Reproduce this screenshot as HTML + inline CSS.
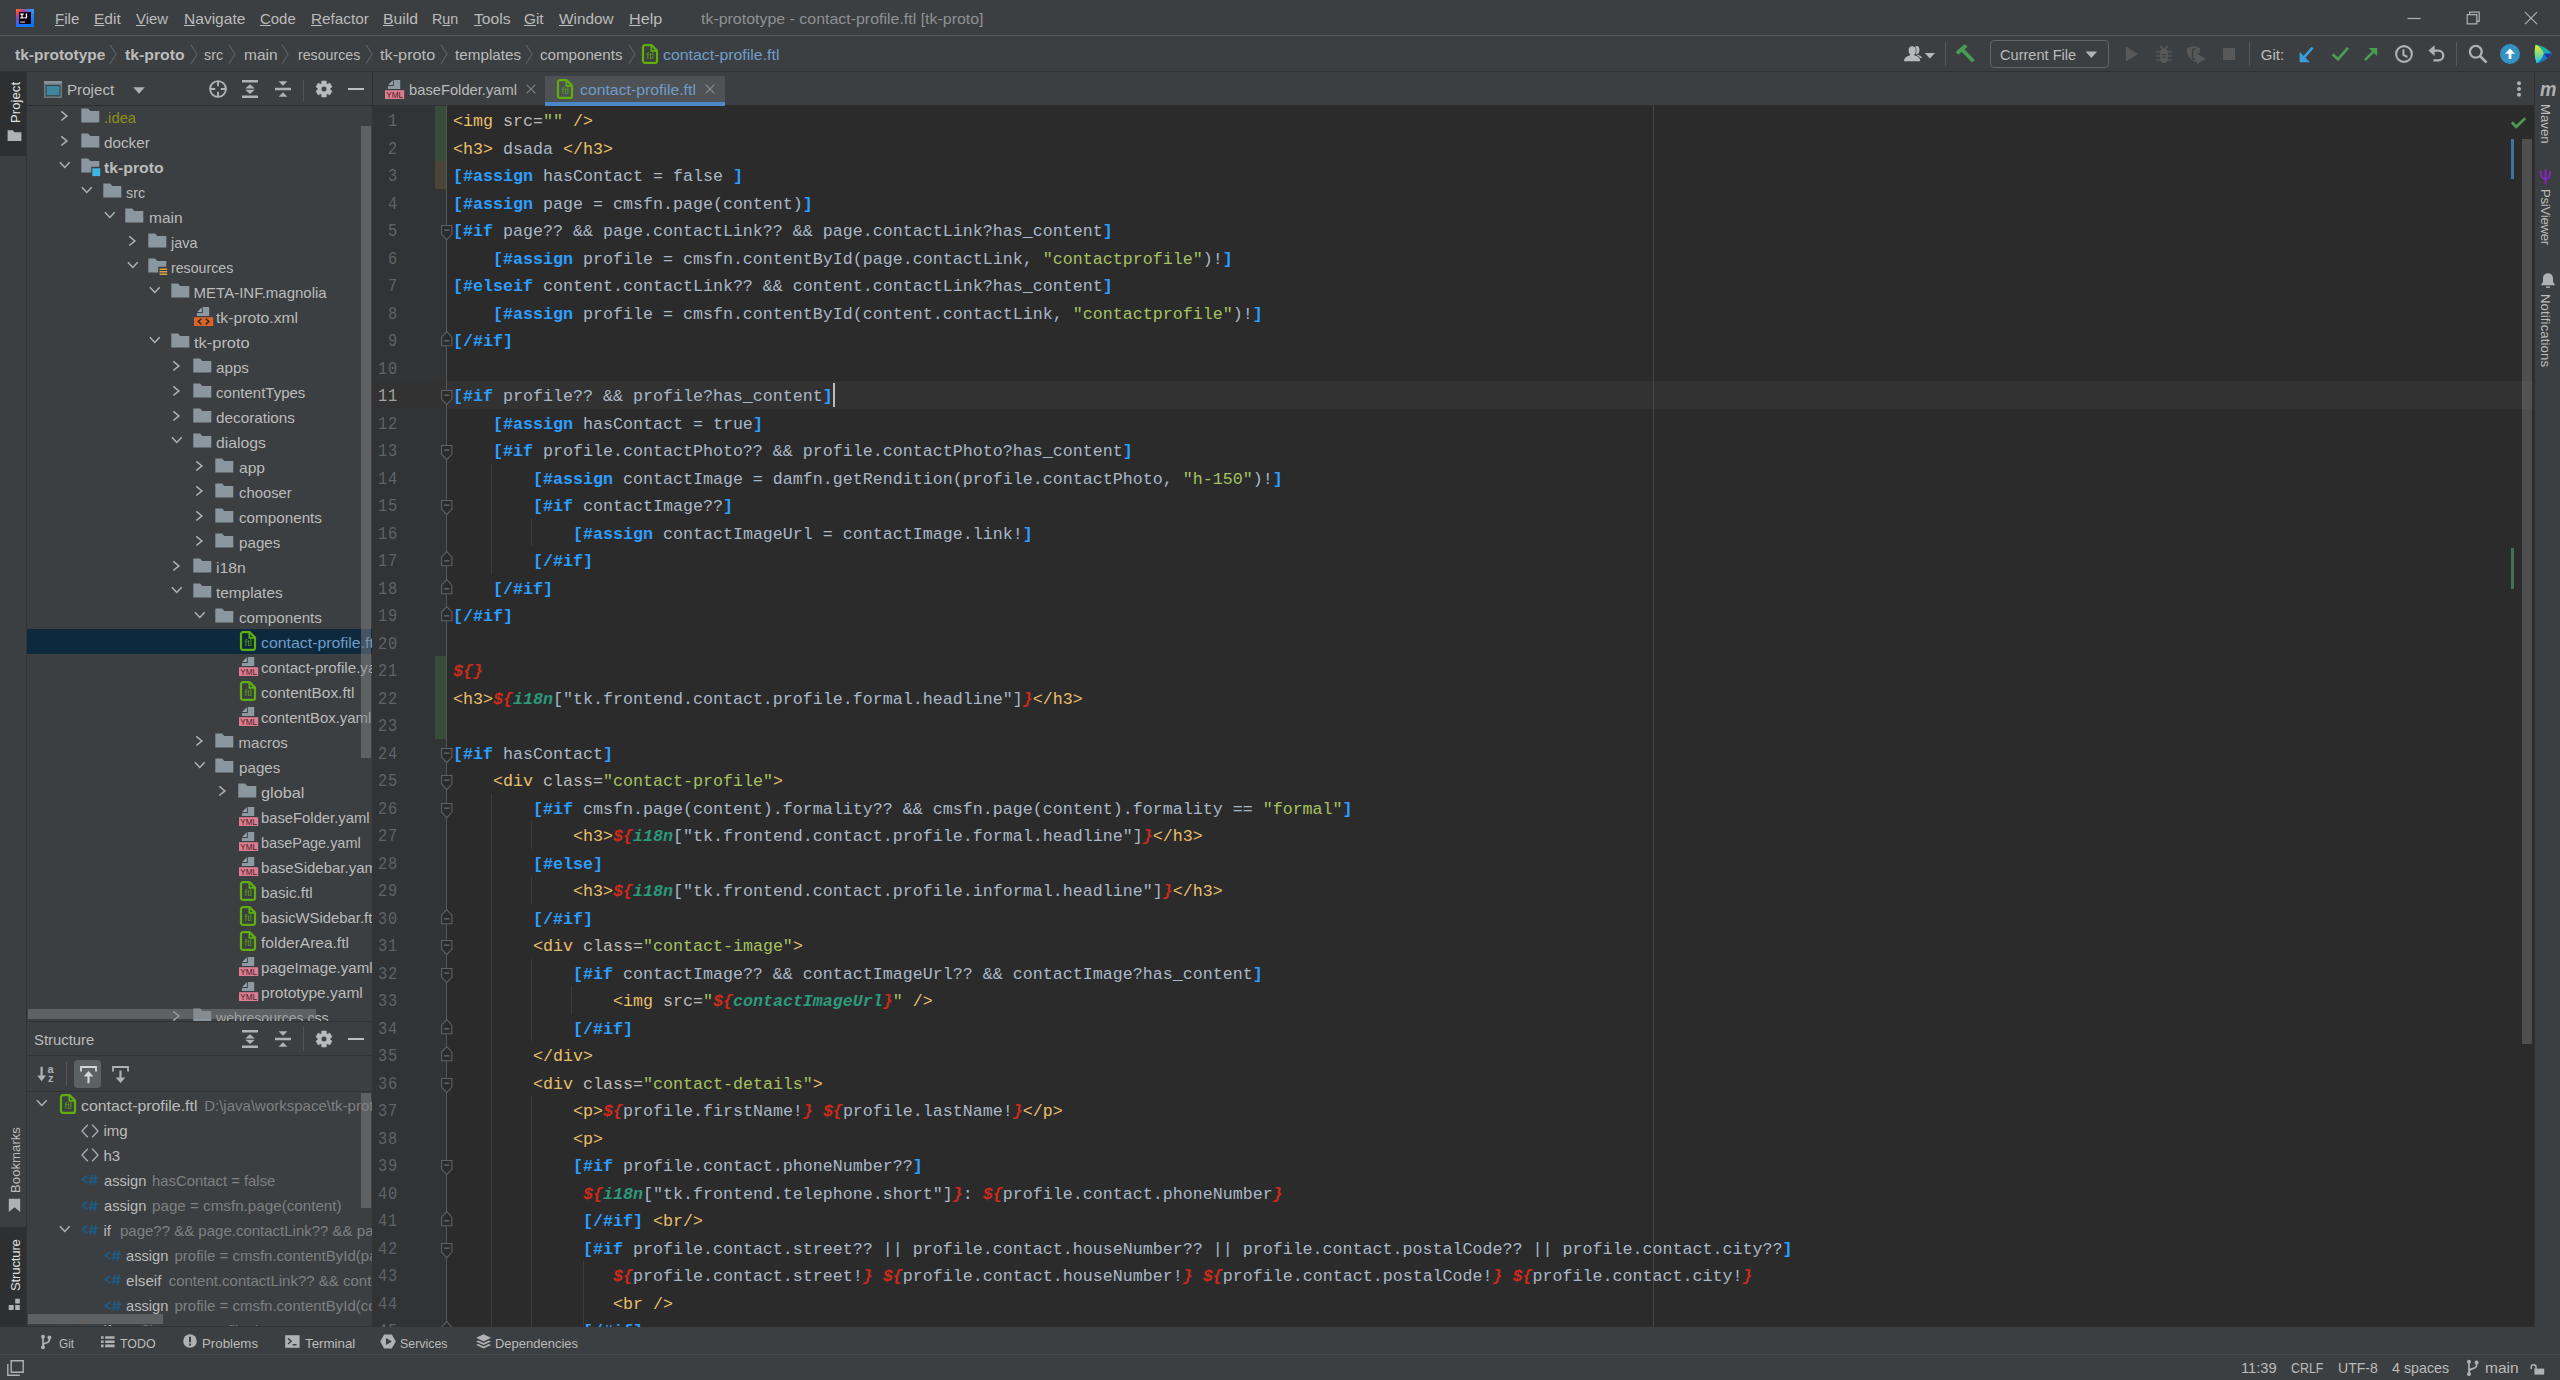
<!DOCTYPE html>
<html><head><meta charset="utf-8"><title>tk-prototype</title>
<style>
*{margin:0;padding:0;box-sizing:border-box}
html,body{width:2560px;height:1380px;overflow:hidden;background:#3c3f41}
body{font-family:"Liberation Sans",sans-serif;font-size:15px;color:#bbbbbb;position:relative}
.a{position:absolute}
.i{position:absolute;overflow:visible}
.t{position:absolute;transform-origin:0 0;white-space:pre;line-height:20px;height:20px;margin-top:-15px;font-size:15px}
.b{font-weight:bold}
u{text-decoration:underline;text-underline-offset:.6px;text-decoration-thickness:1px}
.s13{font-size:13.2px;line-height:18px;height:18px;margin-top:-14px}
.gray{color:#7e8082}
.blue{color:#6e9dcb}
.title{color:#8f9193}
.olive{color:#8d8f1d}
.clip{position:absolute;overflow:hidden}
.vt{position:absolute;white-space:pre;font-size:13.2px;line-height:16px;height:16px;transform-origin:0 0}
/* code */
.ln{position:absolute;left:373px;width:26px;text-align:right;font-family:"Liberation Mono",monospace;font-size:17.8px;letter-spacing:0.95px;transform-origin:100% 50%;transform:scaleX(.86);color:#606366;height:27.5px;line-height:27.5px;white-space:pre;margin-top:2px}
.cl{position:absolute;left:453px;font-family:"Liberation Mono",monospace;font-size:16.667px;color:#a9b7c6;height:27.5px;line-height:27.5px;white-space:pre;margin-top:2px}
.cl b{color:#2e9fff;font-weight:bold}
.cl .g{color:#e8bf6a}
.cl .n{color:#bababa}
.cl .s{color:#a5c261}
.cl .r{color:#cc2b1b;font-weight:bold;font-style:italic}
.cl .v{color:#2a9a7a;font-style:italic;font-weight:bold}
.gd{position:absolute;width:1px;background:#3b3b3b}
</style></head>
<body>
<div class="a" style="left:0px;top:35px;width:2560px;height:1px;background:#555758;"></div>
<div class="a" style="left:0px;top:71px;width:2560px;height:1px;background:#2f3133;"></div>
<svg class="i" style="left:16px;top:9px" width="18" height="18" viewBox="0 0 18 18" ><defs><linearGradient id="ijg" x1="0" y1="0" x2="1" y2="1"><stop offset="0" stop-color="#fc801d"/><stop offset=".22" stop-color="#fe2857"/><stop offset=".5" stop-color="#7a3fe0"/><stop offset=".75" stop-color="#087cfa"/><stop offset="1" stop-color="#0a6fe8"/></linearGradient>
<linearGradient id="ijg2" x1="0" y1="1" x2="1" y2="0"><stop offset="0" stop-color="#087cfa"/><stop offset=".5" stop-color="#087cfa" stop-opacity="0"/><stop offset="1" stop-color="#21b4ff"/></linearGradient></defs>
<rect width="18" height="18" fill="url(#ijg)"/><rect width="18" height="18" fill="url(#ijg2)"/>
<rect x="3" y="3" width="12" height="12" fill="#12000f"/>
<path d="M4.3 4.6h3.4v1.1H6.6v2.6h1.1v1.1H4.3V8.3h1.1V5.7H4.3zM9.8 4.6h1.3v3.3c0 1-.6 1.6-1.6 1.6-.7 0-1.2-.3-1.5-.8l.8-.6c.2.3.4.4.6.4.3 0 .4-.2.4-.6z" fill="#fff"/><rect x="4.3" y="12.6" width="4.6" height=".9" fill="#fff"/></svg>
<span class="t mn" style="left:54.80px;top:24.00px;transform:scaleX(1.0048);"><u>F</u>ile</span>
<span class="t mn" style="left:93.77px;top:24.00px;transform:scaleX(1.0328);"><u>E</u>dit</span>
<span class="t mn" style="left:135.77px;top:24.00px;transform:scaleX(0.9933);"><u>V</u>iew</span>
<span class="t mn" style="left:183.77px;top:24.00px;transform:scaleX(1.0367);"><u>N</u>avigate</span>
<span class="t mn" style="left:260.30px;top:24.00px;transform:scaleX(0.9948);"><u>C</u>ode</span>
<span class="t mn" style="left:311.29px;top:24.00px;transform:scaleX(1.0181);"><u>R</u>efactor</span>
<span class="t mn" style="left:382.75px;top:24.00px;transform:scaleX(1.0524);"><u>B</u>uild</span>
<span class="t mn" style="left:431.86px;top:24.00px;transform:scaleX(0.9567);">R<u>u</u>n</span>
<span class="t mn" style="left:473.71px;top:24.00px;transform:scaleX(1.0481);"><u>T</u>ools</span>
<span class="t mn" style="left:524.29px;top:24.00px;transform:scaleX(1.0238);"><u>G</u>it</span>
<span class="t mn" style="left:558.84px;top:24.00px;transform:scaleX(1.0228);"><u>W</u>indow</span>
<span class="t mn" style="left:628.72px;top:24.00px;transform:scaleX(1.0791);"><u>H</u>elp</span>
<span class="t title" style="left:701.30px;top:24.00px;transform:scaleX(1.0624);">tk-prototype - contact-profile.ftl [tk-proto]</span>
<svg class="i" style="left:2400px;top:6px" width="150" height="24" viewBox="0 0 150 24" ><path d="M7.5 12.5h13" stroke="#b0b2b4" stroke-width="1.2"/>
<path d="M67.2 8.6h9.6v9.2h-9.6z" fill="none" stroke="#b0b2b4" stroke-width="1.2"/><path d="M69.6 8.4v-2.2h9.6v9.2h-2.2" fill="none" stroke="#b0b2b4" stroke-width="1.2"/>
<path d="M125 6.2l12 12M137 6.2l-12 12" stroke="#b0b2b4" stroke-width="1.2"/></svg>
<span class="t b" style="left:14.85px;top:60.00px;transform:scaleX(1.0331);">tk-prototype</span>
<span class="t b" style="left:124.84px;top:60.00px;transform:scaleX(1.0514);">tk-proto</span>
<span class="t " style="left:204.49px;top:60.00px;transform:scaleX(0.9518);">src</span>
<span class="t " style="left:243.62px;top:60.00px;transform:scaleX(1.0340);">main</span>
<span class="t " style="left:297.71px;top:60.00px;transform:scaleX(0.9452);">resources</span>
<span class="t " style="left:379.79px;top:60.00px;transform:scaleX(1.0851);">tk-proto</span>
<span class="t " style="left:454.81px;top:60.00px;transform:scaleX(1.0165);">templates</span>
<span class="t " style="left:540.39px;top:60.00px;transform:scaleX(1.0089);">components</span>
<svg class="i" style="left:109px;top:44px" width="8" height="21" viewBox="0 0 8 21" ><path d="M1 .8L7 10.3 1 19.8" fill="none" stroke="#5d6366" stroke-width="1.1"/></svg>
<svg class="i" style="left:190px;top:44px" width="8" height="21" viewBox="0 0 8 21" ><path d="M1 .8L7 10.3 1 19.8" fill="none" stroke="#5d6366" stroke-width="1.1"/></svg>
<svg class="i" style="left:228px;top:44px" width="8" height="21" viewBox="0 0 8 21" ><path d="M1 .8L7 10.3 1 19.8" fill="none" stroke="#5d6366" stroke-width="1.1"/></svg>
<svg class="i" style="left:281px;top:44px" width="8" height="21" viewBox="0 0 8 21" ><path d="M1 .8L7 10.3 1 19.8" fill="none" stroke="#5d6366" stroke-width="1.1"/></svg>
<svg class="i" style="left:364.5px;top:44px" width="8" height="21" viewBox="0 0 8 21" ><path d="M1 .8L7 10.3 1 19.8" fill="none" stroke="#5d6366" stroke-width="1.1"/></svg>
<svg class="i" style="left:440px;top:44px" width="8" height="21" viewBox="0 0 8 21" ><path d="M1 .8L7 10.3 1 19.8" fill="none" stroke="#5d6366" stroke-width="1.1"/></svg>
<svg class="i" style="left:525px;top:44px" width="8" height="21" viewBox="0 0 8 21" ><path d="M1 .8L7 10.3 1 19.8" fill="none" stroke="#5d6366" stroke-width="1.1"/></svg>
<svg class="i" style="left:628px;top:44px" width="8" height="21" viewBox="0 0 8 21" ><path d="M1 .8L7 10.3 1 19.8" fill="none" stroke="#5d6366" stroke-width="1.1"/></svg>
<svg class="i" style="left:640.5px;top:44px" width="18" height="20" viewBox="0 0 18 20" ><path d="M4 1.100H10.500L16 6.600V16.900a2 2 0 0 1-2 2H4a2 2 0 0 1-2-2V3.100a2 2 0 0 1 2-2z" fill="none" stroke="#60ad0e" stroke-width="2.200" stroke-linejoin="round"/><path d="M10.300 1.400V6.800H15.700" fill="none" stroke="#60ad0e" stroke-width="1.700"/><text x="9.200" y="14.800" style="font:9.400px Liberation Sans,sans-serif" fill="#5aa312" text-anchor="middle">ftl</text></svg>
<span class="t blue" style="left:663.37px;top:60.00px;transform:scaleX(1.0578);">contact-profile.ftl</span>
<svg class="i" style="left:1903px;top:45px" width="34" height="18" viewBox="0 0 34 18" ><ellipse cx="13.900" cy="5" rx="2.500" ry="3.900" fill="#b6b8ba"/><path d="M13 9.500c3 .6 5.600 1.600 6.200 3.600l-3.600 0z" fill="#b6b8ba"/>
<g stroke="#3c3f41" stroke-width="1.400" paint-order="stroke"><ellipse cx="9.200" cy="5.600" rx="3.600" ry="4.300" fill="#b6b8ba"/><path d="M.9 16.200c.2-3.400 2.400-5 5.600-5.800h5.400c3.200.8 5.200 2.400 5.400 5.800z" fill="#b6b8ba"/></g><rect x="7" y="8" width="4.400" height="4" fill="#b6b8ba"/>
<path d="M21.800 8h10.200l-5.100 5.400z" fill="#b6b8ba"/></svg>
<div class="a" style="left:1945px;top:42px;width:1px;height:24px;background:#5a5a5a;"></div>
<svg class="i" style="left:1955px;top:44px" width="22" height="20" viewBox="0 0 22 20" ><path d="M1.900 9.400L10.600 1.800" stroke="#499c54" stroke-width="3.900" fill="none"/><path d="M8.600 1.300h3.600v1.800z" fill="#499c54"/><path d="M6.800 5.200L18.400 17.200" stroke="#499c54" stroke-width="3.700" fill="none"/></svg>
<div class="a" style="left:1990px;top:40px;width:119px;height:28px;border:1px solid #646769;border-radius:4px"></div>
<svg class="i" style="left:2085px;top:51px" width="13" height="8" viewBox="0 0 13 8" ><path d="M.6 .4h11.600L6.400 7z" fill="#afb1b3"/></svg>
<svg class="i" style="left:2125px;top:46px" width="14" height="16" viewBox="0 0 14 16" ><path d="M.9 .6l12.200 7.500L.9 15.600z" fill="#585858"/></svg>
<svg class="i" style="left:2155px;top:45px" width="18" height="19" viewBox="0 0 18 19" ><path d="M5.300 7.200a3.800 3.800 0 0 1 7.600 0v6.600a3.800 4.200 0 0 1-7.600 0z" fill="#585858"/><path d="M5.200 1.100l3 3.100M12.800 1.100l-3 3.100" stroke="#585858" stroke-width="1.700" fill="none"/><path d="M1.100 6.700h15.800M1.100 11h15.800M1.100 15h15.800" stroke="#585858" stroke-width="1.600" fill="none"/><path d="M6.900 9.800h4.600M6.900 12.300h4.600" stroke="#3c3f41" stroke-width="1.100"/></svg>
<svg class="i" style="left:2186px;top:45px" width="21" height="20" viewBox="0 0 21 20" ><path d="M1.100 3L7.400 1.100l6.400 1.900v5.200l-2.800-.6v9c-1 .4-2.200 0-3.600-.8C3.800 13.400 1.100 10.600 1.100 6.600z" fill="#585858"/><path d="M9.800 4c-2.400-.4-3.200.6-3.200 2.400v5.800c0 1.600.8 2.400 2.600 2" fill="none" stroke="#3c3f41" stroke-width="1.500"/><path d="M11 8.500l8.600 5.200L11 18.900z" fill="#585858"/></svg>
<div class="a" style="left:2223px;top:48px;width:12px;height:12px;background:#585858;"></div>
<div class="a" style="left:2249px;top:42px;width:1px;height:24px;background:#5a5a5a;"></div>
<svg class="i" style="left:2298px;top:45px" width="17" height="19" viewBox="0 0 17 19" ><path d="M14.600 2.600L4.400 14" stroke="#3a9fd8" stroke-width="2.6" fill="none"/><path d="M1.600 6.800v10.400h10.400z" fill="#3a9fd8"/></svg>
<svg class="i" style="left:2331px;top:46px" width="19" height="16" viewBox="0 0 19 16" ><path d="M1.600 8.200l5.400 5L17 1.800" stroke="#499c54" stroke-width="2.800" fill="none"/></svg>
<svg class="i" style="left:2363px;top:46px" width="17" height="19" viewBox="0 0 17 19" ><path d="M1.900 14.200L11 5" stroke="#499c54" stroke-width="2.500" fill="none"/><path d="M5.700 1.900h8.500v8.300z" fill="#499c54"/></svg>
<svg class="i" style="left:2394px;top:44px" width="20" height="20" viewBox="0 0 20 20" ><circle cx="10" cy="10" r="7.900" fill="none" stroke="#afb1b3" stroke-width="2.100"/><path d="M9.400 5.200v5.600l4 2.200" fill="none" stroke="#afb1b3" stroke-width="2"/></svg>
<svg class="i" style="left:2427px;top:44px" width="20" height="20" viewBox="0 0 20 20" ><path d="M5.600 6.600h5.800a4.900 4.900 0 0 1 0 9.800H6.400" fill="none" stroke="#afb1b3" stroke-width="2.200"/><path d="M1.400 6.600l6.200-5.400v10.800z" fill="#afb1b3"/></svg>
<div class="a" style="left:2456px;top:42px;width:1px;height:24px;background:#5a5a5a;"></div>
<svg class="i" style="left:2468px;top:44px" width="20" height="20" viewBox="0 0 20 20" ><circle cx="7.800" cy="7.800" r="5.900" fill="none" stroke="#afb1b3" stroke-width="2.300"/><path d="M12 12l6.600 6.600" stroke="#afb1b3" stroke-width="2.600"/></svg>
<svg class="i" style="left:2500px;top:44px" width="20" height="20" viewBox="0 0 20 20" ><circle cx="10" cy="10" r="10" fill="#3592c4"/><path d="M10 4.600l5 5.200h-3.600v5.200H8.600V9.800H5z" fill="#fff"/></svg>
<svg class="i" style="left:2533px;top:44px" width="20" height="20" viewBox="0 0 20 20" ><defs><linearGradient id="sp1" x1="0" y1="0" x2="0" y2="1"><stop offset="0" stop-color="#f9ec19"/><stop offset=".55" stop-color="#7bd88a"/><stop offset="1" stop-color="#17c2e8"/></linearGradient>
<linearGradient id="sp2" x1="0" y1="0" x2="1" y2="1"><stop offset="0" stop-color="#19b98c"/><stop offset="1" stop-color="#1b9de2"/></linearGradient></defs>
<path d="M2.600 .8C1.200 6 1.400 13.500 3.800 19.200c5.800-1.200 11.800-4.800 15.200-9.600C15.400 5 8.800 1.400 2.600 .8z" fill="url(#sp2)"/>
<path d="M2.600 .8C1.200 6 1.400 13.500 3.800 19.200c3.600-2.400 6-5.600 7-9.400C9.800 6.200 6.800 2.800 2.600 .8z" fill="url(#sp1)"/>
<path d="M10.800 9.800l8.200-.2c-3.400 4.800-9.400 8.400-15.200 9.600 3.600-2.400 6-5.600 7-9.400z" fill="#1676c8"/><path d="M10.800 9.800l8.200-.2c-1.200 1.600-2.600 3.200-4.400 4.600z" fill="#2233a8"/></svg>
<span class="t " style="left:2000.32px;top:60.00px;transform:scaleX(0.9726);">Current File</span>
<span class="t " style="left:2260.81px;top:60.00px;">Git:</span>
<div class="a" style="left:0px;top:72px;width:26px;height:1255px;background:#3c3f41;"></div>
<div class="a" style="left:0px;top:72px;width:26px;height:84px;background:#2d2f30;"></div>
<div class="a" style="left:0px;top:1227px;width:26px;height:100px;background:#2d2f30;"></div>
<div class="a" style="left:26px;top:72px;width:1px;height:1255px;background:#323232;"></div>
<span class="vt" style="left:8.0px;top:122.5px;color:#dfe0e1;transform:rotate(-90deg);letter-spacing:0px">Project</span>
<svg class="i" style="left:7px;top:129px" width="15" height="13" viewBox="0 0 15 13" ><path d="M.6 1.200h5.200l1.600 2h7v8.800H.6z" fill="#afb1b3"/></svg>
<span class="vt" style="left:8.0px;top:1192.5px;color:#bbbbbb;transform:rotate(-90deg);letter-spacing:0px">Bookmarks</span>
<svg class="i" style="left:8px;top:1198px" width="13" height="15" viewBox="0 0 13 15" ><path d="M.8 .8h11.400v13.200L6.500 9.200.8 14z" fill="#afb1b3"/></svg>
<span class="vt" style="left:8.0px;top:1290.5px;color:#dfe0e1;transform:rotate(-90deg);letter-spacing:-0.2px">Structure</span>
<svg class="i" style="left:8px;top:1298px" width="13" height="13" viewBox="0 0 13 13" ><path d="M7.200 .800h4.600v4.600H7.200zM.7 7h5v5H.7zM7.200 7h4.600v5H7.200z" fill="#afb1b3"/></svg>
<div class="clip" style="left:27px;top:72px;width:345px;height:949px;background:#3c3f41">
<svg class="i" style="left:17px;top:9px" width="18" height="17" viewBox="0 0 18 17" ><rect x="0" y="0" width="18" height="17" fill="#6e7a82"/><rect x="0" y="0" width="18" height="2.600" fill="#87939a"/><rect x="1.600" y="4" width="14.800" height="11.400" fill="#3b4247"/><rect x="2.600" y="5" width="12.800" height="9.200" fill="#3e86a0"/></svg>
<svg class="i" style="left:106px;top:15px" width="12" height="8" viewBox="0 0 12 8" ><path d="M.3 .300h11.400L6 6.800z" fill="#afb1b3"/></svg>
<svg class="i" style="left:182px;top:8px" width="18" height="18" viewBox="0 0 18 18" ><circle cx="9" cy="9" r="7.900" fill="none" stroke="#afb1b3" stroke-width="1.900"/><path d="M9 1v5.200M9 11.800V17M1 9h5.200M11.800 9H17" stroke="#afb1b3" stroke-width="1.900"/></svg>
<svg class="i" style="left:215px;top:8px" width="16" height="18" viewBox="0 0 16 18" ><path d="M0 0h16v2.500H0zM0 15.500h16V18H0zM8 4.200l4.800 4.400H3.200zM8 14L3.200 9.700h9.600z" fill="#afb1b3"/></svg>
<svg class="i" style="left:248px;top:8px" width="16" height="18" viewBox="0 0 16 18" ><path d="M0 7.800h16v2.500H0zM8 5.800L3.600 1.200h8.800zM8 12.200l4.400 4.600H3.600z" fill="#afb1b3"/></svg>
<div class="a" style="left:276px;top:8px;width:1px;height:21px;background:#555555;"></div>
<svg class="i" style="left:288px;top:8px" width="18" height="18" viewBox="0 0 18 18" ><path d="M6.79 1.00L11.21 1.00L11.38 3.38L12.68 4.13L14.82 3.08L17.03 6.92L15.05 8.25L15.05 9.75L17.03 11.08L14.82 14.92L12.68 13.87L11.38 14.62L11.21 17.00L6.79 17.00L6.62 14.62L5.32 13.87L3.18 14.92L0.97 11.08L2.95 9.75L2.95 8.25L0.97 6.92L3.18 3.08L5.32 4.13L6.62 3.38ZM9 6.200a2.800 2.800 0 1 0 0 5.600 2.800 2.800 0 1 0 0-5.600z" fill="#b8babc" fill-rule="evenodd" stroke="#b8babc" stroke-width=".6" stroke-linejoin="round"/></svg>
<div class="a" style="left:321.2px;top:15.700000000000003px;width:15.6px;height:2.6px;background:#bcbec0;"></div>
<div class="a" style="left:0px;top:33px;width:345px;height:1px;background:#2b2d2e;"></div>
<span class="t " style="left:39.80px;top:23.00px;transform:scaleX(1.0110);">Project</span>
<div class="a" style="left:0px;top:557px;width:345px;height:25px;background:#0d293e;"></div>
<svg class="i" style="left:30px;top:36px" width="16" height="16" viewBox="0 0 16 16" ><path d="M4.300 3.300L9.900 7.900 4.300 12.500" fill="none" stroke="#afb1b3" stroke-width="1.500"/></svg>
<svg class="i" style="left:54px;top:34px" width="20" height="20" viewBox="0 0 20 20" ><path d="M.3 2.400h6.800l2.200 2.600h9v11.400H.3z" fill="#8a979f"/></svg>
<span class="t olive" style="left:76.60px;top:51.00px;transform:scaleX(0.9869);">.idea</span>
<svg class="i" style="left:30px;top:61px" width="16" height="16" viewBox="0 0 16 16" ><path d="M4.300 3.300L9.900 7.900 4.300 12.500" fill="none" stroke="#afb1b3" stroke-width="1.500"/></svg>
<svg class="i" style="left:54px;top:59px" width="20" height="20" viewBox="0 0 20 20" ><path d="M.3 2.400h6.800l2.200 2.600h9v11.400H.3z" fill="#8a979f"/></svg>
<span class="t " style="left:76.60px;top:76.00px;transform:scaleX(1.0159);">docker</span>
<svg class="i" style="left:30px;top:86px" width="16" height="16" viewBox="0 0 16 16" ><path d="M2.900 4.200L7.800 9.500 12.700 4.200" fill="none" stroke="#afb1b3" stroke-width="1.500"/></svg>
<svg class="i" style="left:54px;top:84px" width="20" height="20" viewBox="0 0 20 20" ><path d="M.3 2.400h6.800l2.200 2.600h9v5.800H10.200v5.600H.3z" fill="#8a979f"/><rect x="11.300" y="12.300" width="7.900" height="7.800" fill="#40b6e0"/></svg>
<span class="t b" style="left:76.60px;top:101.00px;transform:scaleX(1.0514);">tk-proto</span>
<svg class="i" style="left:52px;top:111px" width="16" height="16" viewBox="0 0 16 16" ><path d="M2.900 4.200L7.800 9.500 12.700 4.200" fill="none" stroke="#afb1b3" stroke-width="1.500"/></svg>
<svg class="i" style="left:76px;top:109px" width="20" height="20" viewBox="0 0 20 20" ><path d="M.3 2.400h6.800l2.200 2.600h9v11.400H.3z" fill="#8a979f"/></svg>
<span class="t " style="left:99.10px;top:126.00px;transform:scaleX(0.9518);">src</span>
<svg class="i" style="left:75px;top:136px" width="16" height="16" viewBox="0 0 16 16" ><path d="M2.900 4.200L7.800 9.500 12.700 4.200" fill="none" stroke="#afb1b3" stroke-width="1.500"/></svg>
<svg class="i" style="left:98px;top:134px" width="20" height="20" viewBox="0 0 20 20" ><path d="M.3 2.400h6.800l2.200 2.600h9v11.400H.3z" fill="#8a979f"/></svg>
<span class="t " style="left:121.60px;top:151.00px;transform:scaleX(1.0340);">main</span>
<svg class="i" style="left:98px;top:161px" width="16" height="16" viewBox="0 0 16 16" ><path d="M4.300 3.300L9.900 7.900 4.300 12.500" fill="none" stroke="#afb1b3" stroke-width="1.500"/></svg>
<svg class="i" style="left:121px;top:159px" width="20" height="20" viewBox="0 0 20 20" ><path d="M.3 2.400h6.800l2.200 2.600h9v11.400H.3z" fill="#8a979f"/></svg>
<span class="t " style="left:144.10px;top:176.00px;transform:scaleX(0.9592);">java</span>
<svg class="i" style="left:98px;top:186px" width="16" height="16" viewBox="0 0 16 16" ><path d="M2.900 4.200L7.800 9.500 12.700 4.200" fill="none" stroke="#afb1b3" stroke-width="1.500"/></svg>
<svg class="i" style="left:121px;top:184px" width="20" height="20" viewBox="0 0 20 20" ><path d="M.3 2.400h6.800l2.200 2.600h9v5.800H10.200v5.600H.3z" fill="#8a979f"/><path d="M11.600 12.400h7.600v1.500h-7.600zM11.600 14.900h7.600v1.500h-7.600zM11.600 17.400h7.600v1.500h-7.600z" fill="#d9a343"/></svg>
<span class="t " style="left:144.10px;top:201.00px;transform:scaleX(0.9452);">resources</span>
<svg class="i" style="left:120px;top:211px" width="16" height="16" viewBox="0 0 16 16" ><path d="M2.900 4.200L7.800 9.500 12.700 4.200" fill="none" stroke="#afb1b3" stroke-width="1.500"/></svg>
<svg class="i" style="left:144px;top:209px" width="20" height="20" viewBox="0 0 20 20" ><path d="M.3 2.400h6.800l2.200 2.600h9v11.400H.3z" fill="#8a979f"/></svg>
<span class="t " style="left:166.60px;top:226.00px;">META-INF.magnolia</span>
<svg class="i" style="left:167px;top:234px" width="20" height="22" viewBox="0 0 20 22" ><path d="M8.800 1H15.200V10H2.900V7H8.800z" fill="#8d99a1"/><path d="M3.200 6L7.800 1.300V6z" fill="#9ba6ae"/><rect x="0" y="11.200" width="19.200" height="8.800" fill="#d8652c"/><path d="M7.400 12.800L4.200 15.600l3.200 2.800M11.800 12.800l3.200 2.800-3.200 2.800" fill="none" stroke="#3c2418" stroke-width="1.400"/></svg>
<span class="t " style="left:189.10px;top:251.00px;transform:scaleX(1.0474);">tk-proto.xml</span>
<svg class="i" style="left:120px;top:261px" width="16" height="16" viewBox="0 0 16 16" ><path d="M2.900 4.200L7.800 9.500 12.700 4.200" fill="none" stroke="#afb1b3" stroke-width="1.500"/></svg>
<svg class="i" style="left:144px;top:259px" width="20" height="20" viewBox="0 0 20 20" ><path d="M.3 2.400h6.800l2.200 2.600h9v11.400H.3z" fill="#8a979f"/></svg>
<span class="t " style="left:166.60px;top:276.00px;transform:scaleX(1.0951);">tk-proto</span>
<svg class="i" style="left:142px;top:286px" width="16" height="16" viewBox="0 0 16 16" ><path d="M4.300 3.300L9.900 7.900 4.300 12.500" fill="none" stroke="#afb1b3" stroke-width="1.500"/></svg>
<svg class="i" style="left:166px;top:284px" width="20" height="20" viewBox="0 0 20 20" ><path d="M.3 2.400h6.800l2.200 2.600h9v11.400H.3z" fill="#8a979f"/></svg>
<span class="t " style="left:189.10px;top:301.00px;transform:scaleX(1.0131);">apps</span>
<svg class="i" style="left:142px;top:311px" width="16" height="16" viewBox="0 0 16 16" ><path d="M4.300 3.300L9.900 7.900 4.300 12.500" fill="none" stroke="#afb1b3" stroke-width="1.500"/></svg>
<svg class="i" style="left:166px;top:309px" width="20" height="20" viewBox="0 0 20 20" ><path d="M.3 2.400h6.800l2.200 2.600h9v11.400H.3z" fill="#8a979f"/></svg>
<span class="t " style="left:189.10px;top:326.00px;">contentTypes</span>
<svg class="i" style="left:142px;top:336px" width="16" height="16" viewBox="0 0 16 16" ><path d="M4.300 3.300L9.900 7.900 4.300 12.500" fill="none" stroke="#afb1b3" stroke-width="1.500"/></svg>
<svg class="i" style="left:166px;top:334px" width="20" height="20" viewBox="0 0 20 20" ><path d="M.3 2.400h6.800l2.200 2.600h9v11.400H.3z" fill="#8a979f"/></svg>
<span class="t " style="left:189.10px;top:351.00px;transform:scaleX(1.0184);">decorations</span>
<svg class="i" style="left:142px;top:361px" width="16" height="16" viewBox="0 0 16 16" ><path d="M2.900 4.200L7.800 9.500 12.700 4.200" fill="none" stroke="#afb1b3" stroke-width="1.500"/></svg>
<svg class="i" style="left:166px;top:359px" width="20" height="20" viewBox="0 0 20 20" ><path d="M.3 2.400h6.800l2.200 2.600h9v11.400H.3z" fill="#8a979f"/></svg>
<span class="t " style="left:189.10px;top:376.00px;transform:scaleX(1.0517);">dialogs</span>
<svg class="i" style="left:165px;top:386px" width="16" height="16" viewBox="0 0 16 16" ><path d="M4.300 3.300L9.900 7.900 4.300 12.500" fill="none" stroke="#afb1b3" stroke-width="1.500"/></svg>
<svg class="i" style="left:188px;top:384px" width="20" height="20" viewBox="0 0 20 20" ><path d="M.3 2.400h6.800l2.200 2.600h9v11.400H.3z" fill="#8a979f"/></svg>
<span class="t " style="left:211.60px;top:401.00px;transform:scaleX(1.0407);">app</span>
<svg class="i" style="left:165px;top:411px" width="16" height="16" viewBox="0 0 16 16" ><path d="M4.300 3.300L9.900 7.900 4.300 12.500" fill="none" stroke="#afb1b3" stroke-width="1.500"/></svg>
<svg class="i" style="left:188px;top:409px" width="20" height="20" viewBox="0 0 20 20" ><path d="M.3 2.400h6.800l2.200 2.600h9v11.400H.3z" fill="#8a979f"/></svg>
<span class="t " style="left:211.60px;top:426.00px;transform:scaleX(0.9880);">chooser</span>
<svg class="i" style="left:165px;top:436px" width="16" height="16" viewBox="0 0 16 16" ><path d="M4.300 3.300L9.900 7.900 4.300 12.500" fill="none" stroke="#afb1b3" stroke-width="1.500"/></svg>
<svg class="i" style="left:188px;top:434px" width="20" height="20" viewBox="0 0 20 20" ><path d="M.3 2.400h6.800l2.200 2.600h9v11.400H.3z" fill="#8a979f"/></svg>
<span class="t " style="left:211.60px;top:451.00px;transform:scaleX(1.0151);">components</span>
<svg class="i" style="left:165px;top:461px" width="16" height="16" viewBox="0 0 16 16" ><path d="M4.300 3.300L9.900 7.900 4.300 12.500" fill="none" stroke="#afb1b3" stroke-width="1.500"/></svg>
<svg class="i" style="left:188px;top:459px" width="20" height="20" viewBox="0 0 20 20" ><path d="M.3 2.400h6.800l2.200 2.600h9v11.400H.3z" fill="#8a979f"/></svg>
<span class="t " style="left:211.60px;top:476.00px;transform:scaleX(1.0117);">pages</span>
<svg class="i" style="left:142px;top:486px" width="16" height="16" viewBox="0 0 16 16" ><path d="M4.300 3.300L9.900 7.900 4.300 12.500" fill="none" stroke="#afb1b3" stroke-width="1.500"/></svg>
<svg class="i" style="left:166px;top:484px" width="20" height="20" viewBox="0 0 20 20" ><path d="M.3 2.400h6.800l2.200 2.600h9v11.400H.3z" fill="#8a979f"/></svg>
<span class="t " style="left:189.10px;top:501.00px;transform:scaleX(1.0474);">i18n</span>
<svg class="i" style="left:142px;top:511px" width="16" height="16" viewBox="0 0 16 16" ><path d="M2.900 4.200L7.800 9.500 12.700 4.200" fill="none" stroke="#afb1b3" stroke-width="1.500"/></svg>
<svg class="i" style="left:166px;top:509px" width="20" height="20" viewBox="0 0 20 20" ><path d="M.3 2.400h6.800l2.200 2.600h9v11.400H.3z" fill="#8a979f"/></svg>
<span class="t " style="left:189.10px;top:526.00px;transform:scaleX(1.0242);">templates</span>
<svg class="i" style="left:165px;top:536px" width="16" height="16" viewBox="0 0 16 16" ><path d="M2.900 4.200L7.800 9.500 12.700 4.200" fill="none" stroke="#afb1b3" stroke-width="1.500"/></svg>
<svg class="i" style="left:188px;top:534px" width="20" height="20" viewBox="0 0 20 20" ><path d="M.3 2.400h6.800l2.200 2.600h9v11.400H.3z" fill="#8a979f"/></svg>
<span class="t " style="left:211.60px;top:551.00px;transform:scaleX(1.0151);">components</span>
<svg class="i" style="left:212px;top:559px" width="18" height="20" viewBox="0 0 18 20" ><path d="M4 1.100H10.500L16 6.600V16.900a2 2 0 0 1-2 2H4a2 2 0 0 1-2-2V3.100a2 2 0 0 1 2-2z" fill="none" stroke="#60ad0e" stroke-width="2.200" stroke-linejoin="round"/><path d="M10.300 1.400V6.800H15.700" fill="none" stroke="#60ad0e" stroke-width="1.700"/><text x="9.200" y="14.800" style="font:9.400px Liberation Sans,sans-serif" fill="#5aa312" text-anchor="middle">ftl</text></svg>
<span class="t blue" style="left:234.10px;top:576.00px;transform:scaleX(1.0578);">contact-profile.ftl</span>
<svg class="i" style="left:212px;top:584px" width="20" height="22" viewBox="0 0 20 22" ><path d="M8.800 1H15.200V10H2.900V7H8.800z" fill="#8d99a1"/><path d="M3.200 6L7.800 1.300V6z" fill="#9ba6ae"/><rect x="0" y="11.200" width="19.200" height="8.800" fill="#de7d8f"/><text x="9.600" y="18.900" style="font:8.200px Liberation Sans,sans-serif" fill="#45232c" text-anchor="middle" textLength="16.800" lengthAdjust="spacingAndGlyphs">YML</text></svg>
<span class="t " style="left:234.10px;top:601.00px;transform:scaleX(1.0100);">contact-profile.yaml</span>
<svg class="i" style="left:212px;top:609px" width="18" height="20" viewBox="0 0 18 20" ><path d="M4 1.100H10.500L16 6.600V16.900a2 2 0 0 1-2 2H4a2 2 0 0 1-2-2V3.100a2 2 0 0 1 2-2z" fill="none" stroke="#60ad0e" stroke-width="2.200" stroke-linejoin="round"/><path d="M10.300 1.400V6.800H15.700" fill="none" stroke="#60ad0e" stroke-width="1.700"/><text x="9.200" y="14.800" style="font:9.400px Liberation Sans,sans-serif" fill="#5aa312" text-anchor="middle">ftl</text></svg>
<span class="t " style="left:234.10px;top:626.00px;transform:scaleX(1.0274);">contentBox.ftl</span>
<svg class="i" style="left:212px;top:634px" width="20" height="22" viewBox="0 0 20 22" ><path d="M8.800 1H15.200V10H2.900V7H8.800z" fill="#8d99a1"/><path d="M3.200 6L7.800 1.300V6z" fill="#9ba6ae"/><rect x="0" y="11.200" width="19.200" height="8.800" fill="#de7d8f"/><text x="9.600" y="18.900" style="font:8.200px Liberation Sans,sans-serif" fill="#45232c" text-anchor="middle" textLength="16.800" lengthAdjust="spacingAndGlyphs">YML</text></svg>
<span class="t " style="left:234.10px;top:651.00px;transform:scaleX(0.9950);">contentBox.yaml</span>
<svg class="i" style="left:165px;top:661px" width="16" height="16" viewBox="0 0 16 16" ><path d="M4.300 3.300L9.900 7.900 4.300 12.500" fill="none" stroke="#afb1b3" stroke-width="1.500"/></svg>
<svg class="i" style="left:188px;top:659px" width="20" height="20" viewBox="0 0 20 20" ><path d="M.3 2.400h6.800l2.200 2.600h9v11.400H.3z" fill="#8a979f"/></svg>
<span class="t " style="left:211.60px;top:676.00px;">macros</span>
<svg class="i" style="left:165px;top:686px" width="16" height="16" viewBox="0 0 16 16" ><path d="M2.900 4.200L7.800 9.500 12.700 4.200" fill="none" stroke="#afb1b3" stroke-width="1.500"/></svg>
<svg class="i" style="left:188px;top:684px" width="20" height="20" viewBox="0 0 20 20" ><path d="M.3 2.400h6.800l2.200 2.600h9v11.400H.3z" fill="#8a979f"/></svg>
<span class="t " style="left:211.60px;top:701.00px;transform:scaleX(1.0117);">pages</span>
<svg class="i" style="left:188px;top:711px" width="16" height="16" viewBox="0 0 16 16" ><path d="M4.300 3.300L9.900 7.900 4.300 12.500" fill="none" stroke="#afb1b3" stroke-width="1.500"/></svg>
<svg class="i" style="left:211px;top:709px" width="20" height="20" viewBox="0 0 20 20" ><path d="M.3 2.400h6.800l2.200 2.600h9v11.400H.3z" fill="#8a979f"/></svg>
<span class="t " style="left:234.10px;top:726.00px;transform:scaleX(1.0849);">global</span>
<svg class="i" style="left:212px;top:734px" width="20" height="22" viewBox="0 0 20 22" ><path d="M8.800 1H15.200V10H2.900V7H8.800z" fill="#8d99a1"/><path d="M3.200 6L7.800 1.300V6z" fill="#9ba6ae"/><rect x="0" y="11.200" width="19.200" height="8.800" fill="#de7d8f"/><text x="9.600" y="18.900" style="font:8.200px Liberation Sans,sans-serif" fill="#45232c" text-anchor="middle" textLength="16.800" lengthAdjust="spacingAndGlyphs">YML</text></svg>
<span class="t " style="left:234.10px;top:751.00px;transform:scaleX(0.9864);">baseFolder.yaml</span>
<svg class="i" style="left:212px;top:759px" width="20" height="22" viewBox="0 0 20 22" ><path d="M8.800 1H15.200V10H2.900V7H8.800z" fill="#8d99a1"/><path d="M3.200 6L7.800 1.300V6z" fill="#9ba6ae"/><rect x="0" y="11.200" width="19.200" height="8.800" fill="#de7d8f"/><text x="9.600" y="18.900" style="font:8.200px Liberation Sans,sans-serif" fill="#45232c" text-anchor="middle" textLength="16.800" lengthAdjust="spacingAndGlyphs">YML</text></svg>
<span class="t " style="left:234.10px;top:776.00px;transform:scaleX(0.9638);">basePage.yaml</span>
<svg class="i" style="left:212px;top:784px" width="20" height="22" viewBox="0 0 20 22" ><path d="M8.800 1H15.200V10H2.900V7H8.800z" fill="#8d99a1"/><path d="M3.200 6L7.800 1.300V6z" fill="#9ba6ae"/><rect x="0" y="11.200" width="19.200" height="8.800" fill="#de7d8f"/><text x="9.600" y="18.900" style="font:8.200px Liberation Sans,sans-serif" fill="#45232c" text-anchor="middle" textLength="16.800" lengthAdjust="spacingAndGlyphs">YML</text></svg>
<span class="t " style="left:234.10px;top:801.00px;">baseSidebar.yaml</span>
<svg class="i" style="left:212px;top:809px" width="18" height="20" viewBox="0 0 18 20" ><path d="M4 1.100H10.500L16 6.600V16.900a2 2 0 0 1-2 2H4a2 2 0 0 1-2-2V3.100a2 2 0 0 1 2-2z" fill="none" stroke="#60ad0e" stroke-width="2.200" stroke-linejoin="round"/><path d="M10.300 1.400V6.800H15.700" fill="none" stroke="#60ad0e" stroke-width="1.700"/><text x="9.200" y="14.800" style="font:9.400px Liberation Sans,sans-serif" fill="#5aa312" text-anchor="middle">ftl</text></svg>
<span class="t " style="left:234.10px;top:826.00px;transform:scaleX(1.0141);">basic.ftl</span>
<svg class="i" style="left:212px;top:834px" width="18" height="20" viewBox="0 0 18 20" ><path d="M4 1.100H10.500L16 6.600V16.900a2 2 0 0 1-2 2H4a2 2 0 0 1-2-2V3.100a2 2 0 0 1 2-2z" fill="none" stroke="#60ad0e" stroke-width="2.200" stroke-linejoin="round"/><path d="M10.300 1.400V6.800H15.700" fill="none" stroke="#60ad0e" stroke-width="1.700"/><text x="9.200" y="14.800" style="font:9.400px Liberation Sans,sans-serif" fill="#5aa312" text-anchor="middle">ftl</text></svg>
<span class="t " style="left:234.10px;top:851.00px;transform:scaleX(0.9886);">basicWSidebar.ftl</span>
<svg class="i" style="left:212px;top:859px" width="18" height="20" viewBox="0 0 18 20" ><path d="M4 1.100H10.500L16 6.600V16.900a2 2 0 0 1-2 2H4a2 2 0 0 1-2-2V3.100a2 2 0 0 1 2-2z" fill="none" stroke="#60ad0e" stroke-width="2.200" stroke-linejoin="round"/><path d="M10.300 1.400V6.800H15.700" fill="none" stroke="#60ad0e" stroke-width="1.700"/><text x="9.200" y="14.800" style="font:9.400px Liberation Sans,sans-serif" fill="#5aa312" text-anchor="middle">ftl</text></svg>
<span class="t " style="left:234.10px;top:876.00px;transform:scaleX(1.0338);">folderArea.ftl</span>
<svg class="i" style="left:212px;top:884px" width="20" height="22" viewBox="0 0 20 22" ><path d="M8.800 1H15.200V10H2.900V7H8.800z" fill="#8d99a1"/><path d="M3.200 6L7.800 1.300V6z" fill="#9ba6ae"/><rect x="0" y="11.200" width="19.200" height="8.800" fill="#de7d8f"/><text x="9.600" y="18.900" style="font:8.200px Liberation Sans,sans-serif" fill="#45232c" text-anchor="middle" textLength="16.800" lengthAdjust="spacingAndGlyphs">YML</text></svg>
<span class="t " style="left:234.10px;top:901.00px;transform:scaleX(1.0063);">pageImage.yaml</span>
<svg class="i" style="left:212px;top:909px" width="20" height="22" viewBox="0 0 20 22" ><path d="M8.800 1H15.200V10H2.900V7H8.800z" fill="#8d99a1"/><path d="M3.200 6L7.800 1.300V6z" fill="#9ba6ae"/><rect x="0" y="11.200" width="19.200" height="8.800" fill="#de7d8f"/><text x="9.600" y="18.900" style="font:8.200px Liberation Sans,sans-serif" fill="#45232c" text-anchor="middle" textLength="16.800" lengthAdjust="spacingAndGlyphs">YML</text></svg>
<span class="t " style="left:234.10px;top:926.00px;transform:scaleX(1.0344);">prototype.yaml</span>
<svg class="i" style="left:142px;top:936px" width="16" height="16" viewBox="0 0 16 16" ><path d="M4.300 3.300L9.900 7.900 4.300 12.500" fill="none" stroke="#afb1b3" stroke-width="1.500"/></svg>
<svg class="i" style="left:166px;top:934px" width="20" height="20" viewBox="0 0 20 20" ><path d="M.3 2.400h6.800l2.200 2.600h9v11.400H.3z" fill="#8a979f"/></svg>
<span class="t " style="left:189.10px;top:951.00px;transform:scaleX(0.9372);">webresources.css</span>
<div class="a" style="left:334px;top:54px;width:10px;height:632px;background:rgba(128,130,132,.5);"></div>
<div class="a" style="left:1px;top:937px;width:288px;height:10px;background:rgba(128,130,132,.5);"></div>
</div>
<div class="a" style="left:27px;top:1021px;width:345px;height:1px;background:#323232;"></div>
<div class="a" style="left:372px;top:72px;width:1px;height:33px;background:#2b2d2e;"></div>
<div class="clip" style="left:27px;top:1022px;width:345px;height:304px;background:#3c3f41">
<span class="t " style="left:7.19px;top:23.00px;transform:scaleX(0.9906);">Structure</span>
<svg class="i" style="left:215px;top:8px" width="16" height="18" viewBox="0 0 16 18" ><path d="M0 0h16v2.500H0zM0 15.500h16V18H0zM8 4.200l4.800 4.400H3.200zM8 14L3.200 9.700h9.600z" fill="#afb1b3"/></svg>
<svg class="i" style="left:248px;top:8px" width="16" height="18" viewBox="0 0 16 18" ><path d="M0 7.800h16v2.500H0zM8 5.800L3.600 1.200h8.800zM8 12.200l4.400 4.600H3.600z" fill="#afb1b3"/></svg>
<div class="a" style="left:276px;top:5px;width:1px;height:24px;background:#555555;"></div>
<svg class="i" style="left:288px;top:8px" width="18" height="18" viewBox="0 0 18 18" ><path d="M6.79 1.00L11.21 1.00L11.38 3.38L12.68 4.13L14.82 3.08L17.03 6.92L15.05 8.25L15.05 9.75L17.03 11.08L14.82 14.92L12.68 13.87L11.38 14.62L11.21 17.00L6.79 17.00L6.62 14.62L5.32 13.87L3.18 14.92L0.97 11.08L2.95 9.75L2.95 8.25L0.97 6.92L3.18 3.08L5.32 4.13L6.62 3.38ZM9 6.200a2.800 2.800 0 1 0 0 5.600 2.800 2.800 0 1 0 0-5.600z" fill="#b8babc" fill-rule="evenodd" stroke="#b8babc" stroke-width=".6" stroke-linejoin="round"/></svg>
<div class="a" style="left:321.2px;top:15.700000000000045px;width:15.6px;height:2.6px;background:#bcbec0;"></div>
<div class="a" style="left:0px;top:33px;width:345px;height:1px;background:#323232;"></div>
<svg class="i" style="left:10px;top:44px" width="18" height="17" viewBox="0 0 18 17" ><path d="M4.600 .800v12" stroke="#afb1b3" stroke-width="2.200"/><path d="M.2 9.400h8.800L4.600 15.200z" fill="#afb1b3"/><text x="10.500" y="7" style="font:bold 11px Liberation Sans,sans-serif" fill="#afb1b3">a</text><text x="11" y="16.400" style="font:bold 11px Liberation Sans,sans-serif" fill="#afb1b3">z</text></svg>
<div class="a" style="left:39px;top:40px;width:1px;height:24px;background:#555555;"></div>
<div class="a" style="left:47px;top:38px;width:27px;height:27.5px;background:#5c6164;border-radius:4px"></div>
<svg class="i" style="left:52.5px;top:43.5px" width="17" height="18" viewBox="0 0 17 18" ><path d="M1 5.400V1h15v4.400" fill="none" stroke="#d4d6d8" stroke-width="1.800"/><path d="M8.500 17.200V8" stroke="#d4d6d8" stroke-width="2.200"/><path d="M3.600 10.400L8.500 5l4.900 5.400z" fill="#d4d6d8"/></svg>
<svg class="i" style="left:84.5px;top:43.5px" width="17" height="18" viewBox="0 0 17 18" ><path d="M1 5.400V1h15v4.400" fill="none" stroke="#afb1b3" stroke-width="1.800"/><path d="M8.500 4.600v9" stroke="#afb1b3" stroke-width="2.200"/><path d="M3.600 11.400l4.900 5.600 4.900-5.600z" fill="#afb1b3"/></svg>
<div class="a" style="left:0px;top:69px;width:345px;height:1px;background:#323232;"></div>
<svg class="i" style="left:7px;top:74px" width="16" height="16" viewBox="0 0 16 16" ><path d="M2.900 4.200L7.800 9.500 12.700 4.200" fill="none" stroke="#afb1b3" stroke-width="1.500"/></svg>
<svg class="i" style="left:32px;top:72px" width="18" height="20" viewBox="0 0 18 20" ><path d="M4 1.100H10.500L16 6.600V16.900a2 2 0 0 1-2 2H4a2 2 0 0 1-2-2V3.100a2 2 0 0 1 2-2z" fill="none" stroke="#60ad0e" stroke-width="2.200" stroke-linejoin="round"/><path d="M10.300 1.400V6.800H15.700" fill="none" stroke="#60ad0e" stroke-width="1.700"/><text x="9.200" y="14.800" style="font:9.400px Liberation Sans,sans-serif" fill="#5aa312" text-anchor="middle">ftl</text></svg>
<span class="t " style="left:53.60px;top:89.00px;transform:scaleX(1.0578);">contact-profile.ftl</span>
<span class="t gray" style="left:177.21px;top:89.00px;">D:\java\workspace\tk-prototype\tk-proto</span>
<svg class="i" style="left:54.0px;top:102px" width="18" height="14" viewBox="0 0 18 14" ><path d="M6.800 .800L1 7l5.800 6.200M11.200 .800L17 7l-5.800 6.200" fill="none" stroke="#a3b0b9" stroke-width="1.350"/></svg>
<span class="t " style="left:76.50px;top:114.00px;">img</span>
<svg class="i" style="left:54.0px;top:126px" width="18" height="14" viewBox="0 0 18 14" ><path d="M6.800 .800L1 7l5.800 6.200M11.200 .800L17 7l-5.800 6.200" fill="none" stroke="#a3b0b9" stroke-width="1.350"/></svg>
<span class="t " style="left:76.50px;top:139.00px;">h3</span>
<svg class="i" style="left:54.0px;top:152px" width="18" height="12" viewBox="0 0 18 12" ><path d="M6.400 1.800L1.400 5.600l5 3.800" fill="none" stroke="#1d5c88" stroke-width="1.700"/><path d="M10.800 1l-1.400 9.600M14.800 1l-1.400 9.600M8.200 4.200h8.600M7.600 7.800h8.600" stroke="#1d5c88" stroke-width="1.600" fill="none"/></svg>
<span class="t " style="left:76.50px;top:164.00px;transform:scaleX(0.9769);">assign</span>
<span class="t gray" style="left:124.94px;top:164.00px;transform:scaleX(0.9893);">hasContact = false</span>
<svg class="i" style="left:54.0px;top:178px" width="18" height="12" viewBox="0 0 18 12" ><path d="M6.400 1.800L1.400 5.600l5 3.800" fill="none" stroke="#1d5c88" stroke-width="1.700"/><path d="M10.800 1l-1.400 9.600M14.800 1l-1.400 9.600M8.200 4.200h8.600M7.600 7.800h8.600" stroke="#1d5c88" stroke-width="1.600" fill="none"/></svg>
<span class="t " style="left:76.50px;top:189.00px;transform:scaleX(0.9769);">assign</span>
<span class="t gray" style="left:124.95px;top:189.00px;transform:scaleX(1.0127);">page = cmsfn.page(content)</span>
<svg class="i" style="left:30px;top:200px" width="16" height="16" viewBox="0 0 16 16" ><path d="M2.900 4.200L7.800 9.500 12.700 4.200" fill="none" stroke="#afb1b3" stroke-width="1.500"/></svg>
<svg class="i" style="left:54.0px;top:202px" width="18" height="12" viewBox="0 0 18 12" ><path d="M6.400 1.800L1.400 5.600l5 3.800" fill="none" stroke="#1d5c88" stroke-width="1.700"/><path d="M10.800 1l-1.400 9.600M14.800 1l-1.400 9.600M8.200 4.200h8.600M7.600 7.800h8.600" stroke="#1d5c88" stroke-width="1.600" fill="none"/></svg>
<span class="t " style="left:76.50px;top:214.00px;">if</span>
<span class="t gray" style="left:92.96px;top:214.00px;">page?? &amp;&amp; page.contactLink?? &amp;&amp; page.contactLink?has_content</span>
<svg class="i" style="left:76.5px;top:228px" width="18" height="12" viewBox="0 0 18 12" ><path d="M6.400 1.800L1.400 5.600l5 3.800" fill="none" stroke="#1d5c88" stroke-width="1.700"/><path d="M10.800 1l-1.400 9.600M14.800 1l-1.400 9.600M8.200 4.200h8.600M7.600 7.800h8.600" stroke="#1d5c88" stroke-width="1.600" fill="none"/></svg>
<span class="t " style="left:99.00px;top:239.00px;transform:scaleX(0.9769);">assign</span>
<span class="t gray" style="left:147.46px;top:239.00px;">profile = cmsfn.contentById(page.contactLink, "contactprofile")!</span>
<svg class="i" style="left:76.5px;top:252px" width="18" height="12" viewBox="0 0 18 12" ><path d="M6.400 1.800L1.400 5.600l5 3.800" fill="none" stroke="#1d5c88" stroke-width="1.700"/><path d="M10.800 1l-1.400 9.600M14.800 1l-1.400 9.600M8.200 4.200h8.600M7.600 7.800h8.600" stroke="#1d5c88" stroke-width="1.600" fill="none"/></svg>
<span class="t " style="left:99.00px;top:264.00px;transform:scaleX(1.0116);">elseif</span>
<span class="t gray" style="left:141.70px;top:264.00px;">content.contactLink?? &amp;&amp; content.contactLink?has_content</span>
<svg class="i" style="left:76.5px;top:278px" width="18" height="12" viewBox="0 0 18 12" ><path d="M6.400 1.800L1.400 5.600l5 3.800" fill="none" stroke="#1d5c88" stroke-width="1.700"/><path d="M10.800 1l-1.400 9.600M14.800 1l-1.400 9.600M8.200 4.200h8.600M7.600 7.800h8.600" stroke="#1d5c88" stroke-width="1.600" fill="none"/></svg>
<span class="t " style="left:99.00px;top:289.00px;transform:scaleX(0.9769);">assign</span>
<span class="t gray" style="left:147.46px;top:289.00px;">profile = cmsfn.contentById(content.contactLink, "contactprofile")!</span>
<svg class="i" style="left:30px;top:300px" width="16" height="16" viewBox="0 0 16 16" ><path d="M2.900 4.200L7.800 9.500 12.700 4.200" fill="none" stroke="#afb1b3" stroke-width="1.500"/></svg>
<svg class="i" style="left:54.0px;top:302px" width="18" height="12" viewBox="0 0 18 12" ><path d="M6.400 1.800L1.400 5.600l5 3.800" fill="none" stroke="#1d5c88" stroke-width="1.700"/><path d="M10.800 1l-1.400 9.600M14.800 1l-1.400 9.600M8.200 4.200h8.600M7.600 7.800h8.600" stroke="#1d5c88" stroke-width="1.600" fill="none"/></svg>
<span class="t " style="left:76.50px;top:314.00px;">if</span>
<span class="t gray" style="left:92.96px;top:314.00px;">profile?? &amp;&amp; profile?has_content</span>
<div class="a" style="left:334px;top:71px;width:10px;height:115px;background:rgba(128,130,132,.5);"></div>
<div class="a" style="left:1px;top:292px;width:135px;height:10px;background:rgba(128,130,132,.5);"></div>
</div>
<div class="a" style="left:373px;top:72px;width:2161px;height:33px;background:#3c3f41;"></div>
<div class="a" style="left:373px;top:105px;width:2161px;height:1px;background:#2b2b2b;"></div>
<div class="a" style="left:545px;top:76px;width:180px;height:27px;background:#4e5254;"></div>
<svg class="i" style="left:385px;top:79px" width="20" height="22" viewBox="0 0 20 22" ><path d="M8.800 1H15.200V10H2.900V7H8.800z" fill="#8d99a1"/><path d="M3.200 6L7.800 1.300V6z" fill="#9ba6ae"/><rect x="0" y="11.200" width="19.200" height="8.800" fill="#de7d8f"/><text x="9.600" y="18.900" style="font:8.200px Liberation Sans,sans-serif" fill="#45232c" text-anchor="middle" textLength="16.800" lengthAdjust="spacingAndGlyphs">YML</text></svg>
<span class="t " style="left:408.68px;top:95.00px;transform:scaleX(0.9818);">baseFolder.yaml</span>
<svg class="i" style="left:526px;top:84px" width="10" height="10" viewBox="0 0 10 10" ><path d="M.600 .600l8.800 8.800M9.400 .600L.600 9.400" stroke="#7f8385" stroke-width="1.100"/></svg>
<svg class="i" style="left:556px;top:79px" width="18" height="20" viewBox="0 0 18 20" ><path d="M4 1.100H10.500L16 6.600V16.900a2 2 0 0 1-2 2H4a2 2 0 0 1-2-2V3.100a2 2 0 0 1 2-2z" fill="none" stroke="#60ad0e" stroke-width="2.200" stroke-linejoin="round"/><path d="M10.300 1.400V6.800H15.700" fill="none" stroke="#60ad0e" stroke-width="1.700"/><text x="9.200" y="14.800" style="font:9.400px Liberation Sans,sans-serif" fill="#5aa312" text-anchor="middle">ftl</text></svg>
<span class="t blue" style="left:579.87px;top:95.00px;transform:scaleX(1.0532);">contact-profile.ftl</span>
<svg class="i" style="left:705px;top:84px" width="10" height="10" viewBox="0 0 10 10" ><path d="M.600 .600l8.800 8.800M9.400 .600L.600 9.400" stroke="#8b8f91" stroke-width="1.100"/></svg>
<svg class="i" style="left:2516px;top:80px" width="6" height="18" viewBox="0 0 6 18" ><circle cx="3" cy="3.200" r="2" fill="#afb1b3"/><circle cx="3" cy="9" r="2" fill="#afb1b3"/><circle cx="3" cy="14.800" r="2" fill="#afb1b3"/></svg>
<div class="clip" style="left:372px;top:105px;width:2162px;height:1222px;background:#2b2b2b">
<div class="a" style="left:0px;top:0px;width:74px;height:1222px;background:#313335;"></div>
<div class="a" style="left:0px;top:276.0px;width:2161px;height:27.5px;background:#323232;"></div>
<div class="a" style="left:63px;top:1.0px;width:11px;height:55px;background:#384d39;"></div>
<div class="a" style="left:63px;top:56.0px;width:11px;height:27.5px;background:#4b4537;"></div>
<div class="a" style="left:63px;top:551.0px;width:11px;height:82.5px;background:#384d39;"></div>
<div class="a" style="left:74px;top:0px;width:1px;height:1300px;background:#555555;"></div>
<div class="a" style="left:1281px;top:0px;width:1px;height:1300px;background:#474747;"></div>
<div class="gd" style="left:119px;top:358.5px;height:110.0px"></div>
<div class="gd" style="left:159px;top:413.5px;height:27.5px"></div>
<div class="gd" style="left:119px;top:688.5px;height:550.0px"></div>
<div class="gd" style="left:159px;top:716.0px;height:27.5px"></div>
<div class="gd" style="left:159px;top:771.0px;height:27.5px"></div>
<div class="gd" style="left:159px;top:853.5px;height:82.5px"></div>
<div class="gd" style="left:159px;top:991.0px;height:247.5px"></div>
<div class="gd" style="left:199px;top:881.0px;height:27.5px"></div>
<div class="gd" style="left:211px;top:1156.0px;height:82.5px"></div>
<div class="ln" style="left:0px;top:1.0px">1</div>
<div class="cl" style="left:81px;top:1.0px"><span class="g">&lt;img </span><span class="n">src=</span><span class="s">""</span><span class="g"> /&gt;</span></div>
<div class="ln" style="left:0px;top:28.5px">2</div>
<div class="cl" style="left:81px;top:28.5px"><span class="g">&lt;h3&gt;</span> dsada <span class="g">&lt;/h3&gt;</span></div>
<div class="ln" style="left:0px;top:56.0px">3</div>
<div class="cl" style="left:81px;top:56.0px"><b>[#assign</b> hasContact = false <b>]</b></div>
<div class="ln" style="left:0px;top:83.5px">4</div>
<div class="cl" style="left:81px;top:83.5px"><b>[#assign</b> page = cmsfn.page(content)<b>]</b></div>
<div class="ln" style="left:0px;top:111.0px">5</div>
<div class="cl" style="left:81px;top:111.0px"><b>[#if</b> page?? &amp;&amp; page.contactLink?? &amp;&amp; page.contactLink?has_content<b>]</b></div>
<div class="ln" style="left:0px;top:138.5px">6</div>
<div class="cl" style="left:81px;top:138.5px">    <b>[#assign</b> profile = cmsfn.contentById(page.contactLink, <span class="s">"contactprofile"</span>)!<b>]</b></div>
<div class="ln" style="left:0px;top:166.0px">7</div>
<div class="cl" style="left:81px;top:166.0px"><b>[#elseif</b> content.contactLink?? &amp;&amp; content.contactLink?has_content<b>]</b></div>
<div class="ln" style="left:0px;top:193.5px">8</div>
<div class="cl" style="left:81px;top:193.5px">    <b>[#assign</b> profile = cmsfn.contentById(content.contactLink, <span class="s">"contactprofile"</span>)!<b>]</b></div>
<div class="ln" style="left:0px;top:221.0px">9</div>
<div class="cl" style="left:81px;top:221.0px"><b>[/#if]</b></div>
<div class="ln" style="left:0px;top:248.5px">10</div>
<div class="ln" style="color:#a4a3a3;left:0px;top:276.0px">11</div>
<div class="cl" style="left:81px;top:276.0px"><b>[#if</b> profile?? &amp;&amp; profile?has_content<b>]</b></div>
<div class="ln" style="left:0px;top:303.5px">12</div>
<div class="cl" style="left:81px;top:303.5px">    <b>[#assign</b> hasContact = true<b>]</b></div>
<div class="ln" style="left:0px;top:331.0px">13</div>
<div class="cl" style="left:81px;top:331.0px">    <b>[#if</b> profile.contactPhoto?? &amp;&amp; profile.contactPhoto?has_content<b>]</b></div>
<div class="ln" style="left:0px;top:358.5px">14</div>
<div class="cl" style="left:81px;top:358.5px">        <b>[#assign</b> contactImage = damfn.getRendition(profile.contactPhoto, <span class="s">"h-150"</span>)!<b>]</b></div>
<div class="ln" style="left:0px;top:386.0px">15</div>
<div class="cl" style="left:81px;top:386.0px">        <b>[#if</b> contactImage??<b>]</b></div>
<div class="ln" style="left:0px;top:413.5px">16</div>
<div class="cl" style="left:81px;top:413.5px">            <b>[#assign</b> contactImageUrl = contactImage.link!<b>]</b></div>
<div class="ln" style="left:0px;top:441.0px">17</div>
<div class="cl" style="left:81px;top:441.0px">        <b>[/#if]</b></div>
<div class="ln" style="left:0px;top:468.5px">18</div>
<div class="cl" style="left:81px;top:468.5px">    <b>[/#if]</b></div>
<div class="ln" style="left:0px;top:496.0px">19</div>
<div class="cl" style="left:81px;top:496.0px"><b>[/#if]</b></div>
<div class="ln" style="left:0px;top:523.5px">20</div>
<div class="ln" style="left:0px;top:551.0px">21</div>
<div class="cl" style="left:81px;top:551.0px"><span class="r">${}</span></div>
<div class="ln" style="left:0px;top:578.5px">22</div>
<div class="cl" style="left:81px;top:578.5px"><span class="g">&lt;h3&gt;</span><span class="r">${</span><span class="v">i18n</span>["tk.frontend.contact.profile.formal.headline"]<span class="r">}</span><span class="g">&lt;/h3&gt;</span></div>
<div class="ln" style="left:0px;top:606.0px">23</div>
<div class="ln" style="left:0px;top:633.5px">24</div>
<div class="cl" style="left:81px;top:633.5px"><b>[#if</b> hasContact<b>]</b></div>
<div class="ln" style="left:0px;top:661.0px">25</div>
<div class="cl" style="left:81px;top:661.0px">    <span class="g">&lt;div </span><span class="n">class=</span><span class="s">"contact-profile"</span><span class="g">&gt;</span></div>
<div class="ln" style="left:0px;top:688.5px">26</div>
<div class="cl" style="left:81px;top:688.5px">        <b>[#if</b> cmsfn.page(content).formality?? &amp;&amp; cmsfn.page(content).formality == <span class="s">"formal"</span><b>]</b></div>
<div class="ln" style="left:0px;top:716.0px">27</div>
<div class="cl" style="left:81px;top:716.0px">            <span class="g">&lt;h3&gt;</span><span class="r">${</span><span class="v">i18n</span>["tk.frontend.contact.profile.formal.headline"]<span class="r">}</span><span class="g">&lt;/h3&gt;</span></div>
<div class="ln" style="left:0px;top:743.5px">28</div>
<div class="cl" style="left:81px;top:743.5px">        <b>[#else]</b></div>
<div class="ln" style="left:0px;top:771.0px">29</div>
<div class="cl" style="left:81px;top:771.0px">            <span class="g">&lt;h3&gt;</span><span class="r">${</span><span class="v">i18n</span>["tk.frontend.contact.profile.informal.headline"]<span class="r">}</span><span class="g">&lt;/h3&gt;</span></div>
<div class="ln" style="left:0px;top:798.5px">30</div>
<div class="cl" style="left:81px;top:798.5px">        <b>[/#if]</b></div>
<div class="ln" style="left:0px;top:826.0px">31</div>
<div class="cl" style="left:81px;top:826.0px">        <span class="g">&lt;div </span><span class="n">class=</span><span class="s">"contact-image"</span><span class="g">&gt;</span></div>
<div class="ln" style="left:0px;top:853.5px">32</div>
<div class="cl" style="left:81px;top:853.5px">            <b>[#if</b> contactImage?? &amp;&amp; contactImageUrl?? &amp;&amp; contactImage?has_content<b>]</b></div>
<div class="ln" style="left:0px;top:881.0px">33</div>
<div class="cl" style="left:81px;top:881.0px">                <span class="g">&lt;img </span><span class="n">src=</span><span class="s">"</span><span class="r">${</span><span class="v">contactImageUrl</span><span class="r">}</span><span class="s">"</span><span class="g"> /&gt;</span></div>
<div class="ln" style="left:0px;top:908.5px">34</div>
<div class="cl" style="left:81px;top:908.5px">            <b>[/#if]</b></div>
<div class="ln" style="left:0px;top:936.0px">35</div>
<div class="cl" style="left:81px;top:936.0px">        <span class="g">&lt;/div&gt;</span></div>
<div class="ln" style="left:0px;top:963.5px">36</div>
<div class="cl" style="left:81px;top:963.5px">        <span class="g">&lt;div </span><span class="n">class=</span><span class="s">"contact-details"</span><span class="g">&gt;</span></div>
<div class="ln" style="left:0px;top:991.0px">37</div>
<div class="cl" style="left:81px;top:991.0px">            <span class="g">&lt;p&gt;</span><span class="r">${</span>profile.firstName!<span class="r">}</span> <span class="r">${</span>profile.lastName!<span class="r">}</span><span class="g">&lt;/p&gt;</span></div>
<div class="ln" style="left:0px;top:1018.5px">38</div>
<div class="cl" style="left:81px;top:1018.5px">            <span class="g">&lt;p&gt;</span></div>
<div class="ln" style="left:0px;top:1046.0px">39</div>
<div class="cl" style="left:81px;top:1046.0px">            <b>[#if</b> profile.contact.phoneNumber??<b>]</b></div>
<div class="ln" style="left:0px;top:1073.5px">40</div>
<div class="cl" style="left:81px;top:1073.5px">             <span class="r">${</span><span class="v">i18n</span>["tk.frontend.telephone.short"]<span class="r">}</span>: <span class="r">${</span>profile.contact.phoneNumber<span class="r">}</span></div>
<div class="ln" style="left:0px;top:1101.0px">41</div>
<div class="cl" style="left:81px;top:1101.0px">             <b>[/#if]</b> <span class="g">&lt;br/&gt;</span></div>
<div class="ln" style="left:0px;top:1128.5px">42</div>
<div class="cl" style="left:81px;top:1128.5px">             <b>[#if</b> profile.contact.street?? || profile.contact.houseNumber?? || profile.contact.postalCode?? || profile.contact.city??<b>]</b></div>
<div class="ln" style="left:0px;top:1156.0px">43</div>
<div class="cl" style="left:81px;top:1156.0px">                <span class="r">${</span>profile.contact.street!<span class="r">}</span> <span class="r">${</span>profile.contact.houseNumber!<span class="r">}</span> <span class="r">${</span>profile.contact.postalCode!<span class="r">}</span> <span class="r">${</span>profile.contact.city!<span class="r">}</span></div>
<div class="ln" style="left:0px;top:1183.5px">44</div>
<div class="cl" style="left:81px;top:1183.5px">                <span class="g">&lt;br /&gt;</span></div>
<div class="ln" style="left:0px;top:1211.0px">45</div>
<div class="cl" style="left:81px;top:1211.0px">             <b>[/#if]</b></div>
<svg class="i" style="left:69px;top:119.0px" width="12" height="17" viewBox="0 0 12 17" ><path d="M.600 1.500h10.300v8.600L5.750 15.600.600 10.100z" fill="#2b2b2b" stroke="#5f6162" stroke-width="1.100"/><path d="M3.200 6.100h5.200" stroke="#7c7f82" stroke-width="1"/></svg>
<svg class="i" style="left:69px;top:284.0px" width="12" height="17" viewBox="0 0 12 17" ><path d="M.600 1.500h10.300v8.600L5.750 15.600.600 10.100z" fill="#2b2b2b" stroke="#5f6162" stroke-width="1.100"/><path d="M3.200 6.100h5.200" stroke="#7c7f82" stroke-width="1"/></svg>
<svg class="i" style="left:69px;top:339.0px" width="12" height="17" viewBox="0 0 12 17" ><path d="M.600 1.500h10.300v8.600L5.750 15.600.600 10.100z" fill="#2b2b2b" stroke="#5f6162" stroke-width="1.100"/><path d="M3.200 6.100h5.200" stroke="#7c7f82" stroke-width="1"/></svg>
<svg class="i" style="left:69px;top:394.0px" width="12" height="17" viewBox="0 0 12 17" ><path d="M.600 1.500h10.300v8.600L5.750 15.600.600 10.100z" fill="#2b2b2b" stroke="#5f6162" stroke-width="1.100"/><path d="M3.200 6.100h5.200" stroke="#7c7f82" stroke-width="1"/></svg>
<svg class="i" style="left:69px;top:641.5px" width="12" height="17" viewBox="0 0 12 17" ><path d="M.600 1.500h10.300v8.600L5.750 15.600.600 10.100z" fill="#2b2b2b" stroke="#5f6162" stroke-width="1.100"/><path d="M3.200 6.100h5.200" stroke="#7c7f82" stroke-width="1"/></svg>
<svg class="i" style="left:69px;top:669.0px" width="12" height="17" viewBox="0 0 12 17" ><path d="M.600 1.500h10.300v8.600L5.750 15.600.600 10.100z" fill="#2b2b2b" stroke="#5f6162" stroke-width="1.100"/><path d="M3.200 6.100h5.200" stroke="#7c7f82" stroke-width="1"/></svg>
<svg class="i" style="left:69px;top:696.5px" width="12" height="17" viewBox="0 0 12 17" ><path d="M.600 1.500h10.300v8.600L5.750 15.600.600 10.100z" fill="#2b2b2b" stroke="#5f6162" stroke-width="1.100"/><path d="M3.200 6.100h5.200" stroke="#7c7f82" stroke-width="1"/></svg>
<svg class="i" style="left:69px;top:834.0px" width="12" height="17" viewBox="0 0 12 17" ><path d="M.600 1.500h10.300v8.600L5.750 15.600.600 10.100z" fill="#2b2b2b" stroke="#5f6162" stroke-width="1.100"/><path d="M3.200 6.100h5.200" stroke="#7c7f82" stroke-width="1"/></svg>
<svg class="i" style="left:69px;top:861.5px" width="12" height="17" viewBox="0 0 12 17" ><path d="M.600 1.500h10.300v8.600L5.750 15.600.600 10.100z" fill="#2b2b2b" stroke="#5f6162" stroke-width="1.100"/><path d="M3.200 6.100h5.200" stroke="#7c7f82" stroke-width="1"/></svg>
<svg class="i" style="left:69px;top:971.5px" width="12" height="17" viewBox="0 0 12 17" ><path d="M.600 1.500h10.300v8.600L5.750 15.600.600 10.100z" fill="#2b2b2b" stroke="#5f6162" stroke-width="1.100"/><path d="M3.200 6.100h5.200" stroke="#7c7f82" stroke-width="1"/></svg>
<svg class="i" style="left:69px;top:1054.0px" width="12" height="17" viewBox="0 0 12 17" ><path d="M.600 1.500h10.300v8.600L5.750 15.600.600 10.100z" fill="#2b2b2b" stroke="#5f6162" stroke-width="1.100"/><path d="M3.200 6.100h5.200" stroke="#7c7f82" stroke-width="1"/></svg>
<svg class="i" style="left:69px;top:1136.5px" width="12" height="17" viewBox="0 0 12 17" ><path d="M.600 1.500h10.300v8.600L5.750 15.600.600 10.100z" fill="#2b2b2b" stroke="#5f6162" stroke-width="1.100"/><path d="M3.200 6.100h5.200" stroke="#7c7f82" stroke-width="1"/></svg>
<svg class="i" style="left:69px;top:225.0px" width="12" height="17" viewBox="0 0 12 17" ><path d="M.600 15.800h10.300V7.200L5.750 1.600.600 7.200z" fill="#2b2b2b" stroke="#5f6162" stroke-width="1.100"/><path d="M3.200 10.900h5.200" stroke="#7c7f82" stroke-width="1"/></svg>
<svg class="i" style="left:69px;top:445.0px" width="12" height="17" viewBox="0 0 12 17" ><path d="M.600 15.800h10.300V7.200L5.750 1.600.600 7.200z" fill="#2b2b2b" stroke="#5f6162" stroke-width="1.100"/><path d="M3.200 10.900h5.200" stroke="#7c7f82" stroke-width="1"/></svg>
<svg class="i" style="left:69px;top:472.5px" width="12" height="17" viewBox="0 0 12 17" ><path d="M.600 15.800h10.300V7.200L5.750 1.600.600 7.200z" fill="#2b2b2b" stroke="#5f6162" stroke-width="1.100"/><path d="M3.200 10.900h5.200" stroke="#7c7f82" stroke-width="1"/></svg>
<svg class="i" style="left:69px;top:500.0px" width="12" height="17" viewBox="0 0 12 17" ><path d="M.600 15.800h10.300V7.200L5.750 1.600.600 7.200z" fill="#2b2b2b" stroke="#5f6162" stroke-width="1.100"/><path d="M3.200 10.900h5.200" stroke="#7c7f82" stroke-width="1"/></svg>
<svg class="i" style="left:69px;top:802.5px" width="12" height="17" viewBox="0 0 12 17" ><path d="M.600 15.800h10.300V7.200L5.750 1.600.600 7.200z" fill="#2b2b2b" stroke="#5f6162" stroke-width="1.100"/><path d="M3.200 10.900h5.200" stroke="#7c7f82" stroke-width="1"/></svg>
<svg class="i" style="left:69px;top:912.5px" width="12" height="17" viewBox="0 0 12 17" ><path d="M.600 15.800h10.300V7.200L5.750 1.600.600 7.200z" fill="#2b2b2b" stroke="#5f6162" stroke-width="1.100"/><path d="M3.200 10.900h5.200" stroke="#7c7f82" stroke-width="1"/></svg>
<svg class="i" style="left:69px;top:940.0px" width="12" height="17" viewBox="0 0 12 17" ><path d="M.600 15.800h10.300V7.200L5.750 1.600.600 7.200z" fill="#2b2b2b" stroke="#5f6162" stroke-width="1.100"/><path d="M3.200 10.900h5.200" stroke="#7c7f82" stroke-width="1"/></svg>
<svg class="i" style="left:69px;top:1105.0px" width="12" height="17" viewBox="0 0 12 17" ><path d="M.600 15.800h10.300V7.200L5.750 1.600.600 7.200z" fill="#2b2b2b" stroke="#5f6162" stroke-width="1.100"/><path d="M3.200 10.900h5.200" stroke="#7c7f82" stroke-width="1"/></svg>
<svg class="i" style="left:69px;top:1215.0px" width="12" height="17" viewBox="0 0 12 17" ><path d="M.600 15.800h10.300V7.200L5.750 1.600.600 7.200z" fill="#2b2b2b" stroke="#5f6162" stroke-width="1.100"/><path d="M3.200 10.900h5.200" stroke="#7c7f82" stroke-width="1"/></svg>
<div class="a" style="left:461px;top:278.0px;width:2px;height:24px;background:#bbbbbb;"></div>
<div class="a" style="left:2150px;top:34px;width:10px;height:905px;background:rgba(128,128,128,.42);"></div>
<div class="a" style="left:2139px;top:34px;width:3px;height:40px;background:#43709f;"></div>
<div class="a" style="left:2139px;top:443px;width:3px;height:41px;background:#437152;"></div>
<svg class="i" style="left:2138px;top:11px" width="17" height="14" viewBox="0 0 17 14" ><path d="M1.800 6.200l4.400 4.600 9-8.600" fill="none" stroke="#499c54" stroke-width="2.700"/></svg>
</div>
<div class="a" style="left:2534px;top:72px;width:1px;height:1255px;background:#2f3133;"></div>
<div class="a" style="left:545px;top:102px;width:180px;height:4px;background:#4a88c7;"></div>
<div class="a" style="left:2535px;top:72px;width:25px;height:1255px;background:#3c3f41;"></div>
<span class="a" style="left:2539.500px;top:77px;font:italic bold 21px/24px 'Liberation Sans',sans-serif;color:#afb1b3;transform-origin:0 0;transform:scaleX(.88)">m</span>
<span class="vt" style="left:2553.0px;top:104.2px;color:#bbbbbb;transform:rotate(90deg);letter-spacing:0px">Maven</span>
<svg class="i" style="left:2540px;top:169px" width="11" height="16" viewBox="0 0 11 16" ><path d="M5.500 .600v14.800M1 2.200c-.6 4.400.8 7.600 4.500 8M10 2.200c.6 4.400-.8 7.600-4.500 8" fill="none" stroke="#8e22c8" stroke-width="1.800"/></svg>
<span class="vt" style="left:2553.0px;top:189px;color:#bbbbbb;transform:rotate(90deg);letter-spacing:-0.27px">PsiViewer</span>
<svg class="i" style="left:2540px;top:272px" width="16" height="17" viewBox="0 0 16 17" ><path d="M8 1.200c3.200 0 5 2.200 5 5.200v3.400l1.800 2.800v.6H1.200v-.6L3 9.800V6.400c0-3 1.800-5.200 5-5.200z" fill="#afb1b3"/><path d="M6 14.400h4v1.400H6z" fill="#afb1b3"/></svg>
<span class="vt" style="left:2553.0px;top:293.8px;color:#bbbbbb;transform:rotate(90deg);letter-spacing:0.1px">Notifications</span>
<div class="a" style="left:0px;top:1326px;width:373px;height:1px;background:#323232;"></div>
<div class="a" style="left:0px;top:1327px;width:2560px;height:27px;background:#3c3f41;"></div>
<div class="a" style="left:0px;top:1354px;width:2560px;height:1px;background:#484a4b;"></div>
<div class="a" style="left:0px;top:1355px;width:2560px;height:25px;background:#3c3f41;"></div>
<svg class="i" style="left:40px;top:1334px" width="12" height="16" viewBox="0 0 12 16" ><circle cx="3" cy="2.800" r="2" fill="#afb1b3"/><circle cx="9.400" cy="3.600" r="2" fill="#afb1b3"/><circle cx="3" cy="13.200" r="2" fill="#afb1b3"/><path d="M3 3v10M9.400 4v1.600c0 2-1.400 3-3.400 3.400-1.600.4-3 1-3 2.600" fill="none" stroke="#afb1b3" stroke-width="1.700"/></svg>
<span class="t s13" style="left:59.46px;top:1348.50px;transform:scaleX(0.8937);">Git</span>
<svg class="i" style="left:101px;top:1336px" width="14" height="12" viewBox="0 0 14 12" ><path d="M0 .2h2.600v2.600H0zM4.200 .2h9.400v2.600H4.200zM0 4.400h2.600V7H0zM4.200 4.400h9.400V7H4.200zM0 8.600h2.600v2.600H0zM4.200 8.600h9.400v2.600H4.200z" fill="#afb1b3"/></svg>
<span class="t s13" style="left:120.28px;top:1348.50px;transform:scaleX(0.9432);">TODO</span>
<svg class="i" style="left:182.5px;top:1334px" width="14" height="14" viewBox="0 0 14 14" ><circle cx="7" cy="7" r="6.800" fill="#afb1b3"/><path d="M6 2.800h2v5.400H6zM6 9.400h2v2H6z" fill="#3c3f41"/></svg>
<span class="t s13" style="left:201.91px;top:1348.50px;transform:scaleX(1.0058);">Problems</span>
<svg class="i" style="left:284.5px;top:1334.5px" width="15" height="13" viewBox="0 0 15 13" ><rect x=".2" y=".2" width="14.400" height="12.600" fill="#afb1b3"/><path d="M3 3.400l3.200 2.800L3 9M7.600 9.800h4" fill="none" stroke="#3c3f41" stroke-width="1.400"/></svg>
<span class="t s13" style="left:305.27px;top:1348.50px;transform:scaleX(1.0093);">Terminal</span>
<svg class="i" style="left:380px;top:1334px" width="16" height="15" viewBox="0 0 16 15" ><path d="M4.200 .4h7.600L15.800 7.500 11.800 14.600H4.200L.2 7.500z" fill="#afb1b3"/><path d="M6 4v7l5.800-3.500z" fill="#3c3f41"/></svg>
<span class="t s13" style="left:400.26px;top:1348.50px;transform:scaleX(0.9398);">Services</span>
<svg class="i" style="left:475.5px;top:1334px" width="16" height="16" viewBox="0 0 16 16" ><path d="M7.600 .2l7.400 3.600-7.400 3.600L.2 3.800z" fill="#afb1b3"/><path d="M.2 7.400l2-1 5.400 2.600L13 6.400l2 1-7.400 3.600zM.2 11l2-1 5.400 2.600L13 10l2 1-7.400 3.600z" fill="#afb1b3"/></svg>
<span class="t s13" style="left:495.44px;top:1348.50px;transform:scaleX(0.9841);">Dependencies</span>
<svg class="i" style="left:7px;top:1360px" width="17" height="16" viewBox="0 0 17 16" ><path d="M4.200 .8h12v11.400h-12z" fill="none" stroke="#afb1b3" stroke-width="1.400"/><path d="M.8 4v11.200h12" fill="none" stroke="#afb1b3" stroke-width="1.400"/></svg>
<span class="t " style="left:2240.91px;top:1373.00px;transform:scaleX(0.9808);">11:39</span>
<span class="t " style="left:2290.92px;top:1373.00px;transform:scaleX(0.8277);">CRLF</span>
<span class="t " style="left:2338.45px;top:1373.00px;transform:scaleX(0.9377);">UTF-8</span>
<span class="t " style="left:2392.23px;top:1373.00px;transform:scaleX(0.9520);">4 spaces</span>
<svg class="i" style="left:2466px;top:1359px" width="14" height="18" viewBox="0 0 14 18" ><circle cx="3" cy="2.800" r="2" fill="#afb1b3"/><circle cx="10.600" cy="3.600" r="2" fill="#afb1b3"/><circle cx="3" cy="15" r="2" fill="#afb1b3"/><path d="M3 3v12M10.600 4v1.800c0 2.200-1.600 3.400-3.800 3.800-1.800.4-3.800 1.200-3.800 3" fill="none" stroke="#afb1b3" stroke-width="1.700"/></svg>
<span class="t " style="left:2484.62px;top:1373.00px;transform:scaleX(1.0340);">main</span>
<svg class="i" style="left:2530px;top:1364px" width="15" height="11" viewBox="0 0 15 11" ><path d="M1.200 5V3.200a2.400 2.400 0 0 1 4.800 0V5" fill="none" stroke="#afb1b3" stroke-width="1.500"/><rect x="4.400" y="4.600" width="9.800" height="6" fill="#afb1b3"/></svg>
</body></html>
